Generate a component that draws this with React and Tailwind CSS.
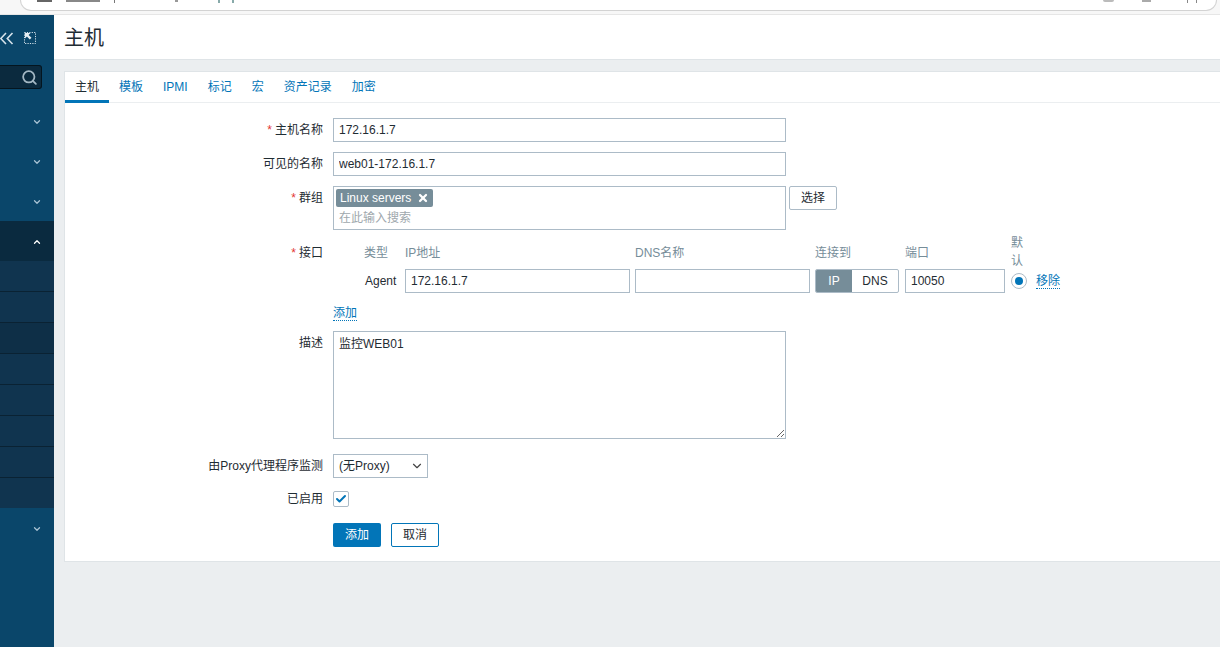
import { ChevronDown, ChevronUp, Search, Check, X } from 'lucide-react';

const font = { fontFamily: '"Liberation Sans", "Noto Sans CJK SC", Arial, sans-serif' };

const tabs = ['主机', '模板', 'IPMI', '标记', '宏', '资产记录', '加密'];
const subRows = [0, 1, 2, 3, 4, 5, 6, 7];

const inputCls = 'h-6 border border-[#acbbc7] bg-white px-[5px] text-xs text-[#1f2c33] outline-none';

const Label = ({ required, children, className = '' }) => (
  <div className={`w-[258px] shrink-0 text-right text-xs leading-6 text-[#1f2c33] ${className}`}>
    {required && <span className="mr-[3px] text-[#e33734]">*</span>}
    {children}
  </div>
);

const NavGroup = ({ height, chevronTop }) => (
  <div className="relative w-full shrink-0 bg-[#0a466a]" style={{ height }}>
    <ChevronDown className="absolute left-[32px] h-2.5 w-2.5 text-[#a9c3d4]" strokeWidth={3} style={{ top: chevronTop }} />
  </div>
);

const App = () => {
  return (
    <div className="flex h-[647px] w-[1220px] flex-col overflow-hidden bg-[#ebeef0]" style={font}>
      {/* browser chrome, almost cropped away */}
      <div className="h-[15px] shrink-0 border-b border-[#e6e6e6] bg-[#f7f7f7]">
        <div className="mx-[20px] flex h-[11px] w-[1197px] items-start rounded-b-[14px] border-x border-b border-[#d3d3d3] bg-white">
          <div className="ml-[16px] h-[2px] w-[15px] bg-[#666]" />
          <div className="ml-[14px] h-[2px] w-[34px] bg-[#888]" />
          <div className="ml-[14px] h-[3px] w-px bg-[#777]" />
          <div className="ml-[60px] h-[2px] w-[3px] bg-[#999]" />
          <div className="ml-[40px] h-[3px] w-[2px] bg-[#8aa]" />
          <div className="ml-[12px] h-[3px] w-[2px] bg-[#8aa]" />
          <div className="ml-auto mr-[28px] h-[2px] w-[11px] rounded-b bg-[#bbb]" />
          <div className="mr-[36px] h-[2px] w-[9px] bg-[#aaa]" />
          <div className="mr-[19px] h-[3px] w-[10px] border-x border-[#888]" />
        </div>
      </div>

      <div className="flex min-h-0 flex-1">
        {/* sidebar */}
        <aside className="flex w-[54px] shrink-0 flex-col bg-[#0a466a]">
          <div className="flex h-[50px] shrink-0 items-start pt-[17px]">
            <svg className="h-[13px] w-[14px]" viewBox="0 0 14 13" fill="none" stroke="#d5e2ea" strokeWidth="1.6">
              <path d="M6 1 .8 6.5 6 12M12.5 1 7.3 6.5l5.2 5.5" />
            </svg>
            <svg className="ml-[10px] h-3 w-3" viewBox="0 0 12 12" fill="none">
              <path d="M.5.5h11v11H.5z" stroke="#d5e2ea" strokeDasharray="1.2 1.2" />
              <path d="M1 1h5.5L4.6 2.9 7.5 5.8 5.8 7.5 2.9 4.6 1 6.5z" fill="#e6eef3" />
            </svg>
          </div>
          <div className="flex h-6 w-[42px] shrink-0 items-center justify-end rounded-r-[3px] border border-l-0 border-[#04151f] bg-[#0b2a3e] pr-[3px]">
            <Search className="h-[17px] w-[17px] text-[#a4b8c4]" strokeWidth={2.5} />
          </div>
          <NavGroup height={52} chevronTop={28} />
          <NavGroup height={40} chevronTop={16} />
          <NavGroup height={40} chevronTop={16} />
          <div className="relative h-[40px] shrink-0 bg-[#0a2a3f]">
            <ChevronUp className="absolute left-[32px] top-[16px] h-2.5 w-2.5 text-white" strokeWidth={3} />
          </div>
          <div className="shrink-0">
            {subRows.map((i) => (
              <div
                key={i}
                className={`border-[#0a2233] ${i === 2 ? 'bg-[#0e2f47]' : 'bg-[#10344f]'} ${i === 7 ? 'h-[30px]' : 'h-[31px] border-b'}`}
              />
            ))}
          </div>
          <NavGroup height={40} chevronTop={16} />
        </aside>

        {/* main */}
        <main className="min-w-0 flex-1">
          <div className="flex h-[45px] items-center border-b border-[#dfe4e7] bg-white pl-[10px] pt-[1px] text-[20px] text-[#1f2c33]">主机</div>

          <div className="ml-[10px] mt-[11px] h-[491px] w-[1170px] border border-[#dfe4e7] bg-white">
            <div className="flex h-[31px] border-b border-[#ebeef0] text-xs">
              {tabs.map((t, i) => (
                <div
                  key={t}
                  className={`flex h-[31px] items-center px-[10px] ${i === 0 ? 'border-b-[3px] border-[#0275b8] pt-[2px] text-[#1f2c33]' : 'pb-[1px] text-[#0275b8]'}`}
                >
                  {t}
                </div>
              ))}
            </div>

            <div className="flex flex-col pt-[15px]">
              <div className="flex gap-[10px]">
                <Label required>主机名称</Label>
                <input readOnly value="172.16.1.7" className={`${inputCls} w-[453px]`} />
              </div>

              <div className="mt-[10px] flex gap-[10px]">
                <Label>可见的名称</Label>
                <input readOnly value="web01-172.16.1.7" className={`${inputCls} w-[453px]`} />
              </div>

              <div className="mt-[10px] flex gap-[10px]">
                <Label required>群组</Label>
                <div className="h-[44px] w-[453px] border border-[#acbbc7] px-[2px] pt-[2px]">
                  <div className="flex h-[18px] w-fit items-center gap-[6px] rounded-[2px] bg-[#768d99] pl-[4px] pr-[4px] text-xs text-white">
                    Linux servers
                    <X className="h-3 w-3" strokeWidth={4.5} />
                  </div>
                  <div className="mt-[3px] pl-[3px] text-xs leading-[17px] text-[#a0a8ad]">在此输入搜索</div>
                </div>
                <button className="ml-[-7px] h-6 w-12 rounded-[2px] border border-[#acbbc7] text-xs text-[#1f2c33]">选择</button>
              </div>

              <div className="mt-[4px] flex gap-[10px]">
                <Label required className="pt-[7px]">接口</Label>
                <div className="flex items-end text-xs">
                  <div className="w-[72px]">
                    <div className="mb-[8px] pl-[31px] leading-[16px] text-[#768d99]">类型</div>
                    <div className="h-6 pl-[32px] leading-6 text-[#1f2c33]">Agent</div>
                  </div>
                  <div className="mr-[5px] w-[225px]">
                    <div className="mb-[8px] leading-[16px] text-[#768d99]">IP地址</div>
                    <input readOnly value="172.16.1.7" className={`${inputCls} w-full`} />
                  </div>
                  <div className="mr-[5px] w-[175px]">
                    <div className="mb-[8px] leading-[16px] text-[#768d99]">DNS名称</div>
                    <input readOnly value="" className={`${inputCls} w-full`} />
                  </div>
                  <div className="mr-[6px] w-[84px]">
                    <div className="mb-[8px] leading-[16px] text-[#768d99]">连接到</div>
                    <div className="flex h-6 overflow-hidden rounded-[2px] border border-[#acbbc7]">
                      <div className="flex w-[36px] items-center justify-center bg-[#768d99] text-white">IP</div>
                      <div className="flex flex-1 items-center justify-center text-[#1f2c33]">DNS</div>
                    </div>
                  </div>
                  <div className="mr-[6px] w-[100px]">
                    <div className="mb-[8px] leading-[16px] text-[#768d99]">端口</div>
                    <input readOnly value="10050" className={`${inputCls} w-full`} />
                  </div>
                  <div className="w-[25px]">
                    <div className="mb-[-1px] w-[12px] leading-[18px] text-[#768d99]">默认</div>
                    <div className="flex h-6 items-center">
                      <div className="flex h-4 w-4 items-center justify-center rounded-full border border-[#acbbc7]">
                        <div className="h-2 w-2 rounded-full bg-[#0275b8]" />
                      </div>
                    </div>
                  </div>
                  <div className="flex h-6 items-center">
                    <span className="border-b border-dotted border-[#0275b8] leading-[14px] text-[#0275b8]">移除</span>
                  </div>
                </div>
              </div>

              <div className="mt-[12px] pl-[268px] text-xs">
                <span className="border-b border-dotted border-[#0275b8] leading-[14px] text-[#0275b8]">添加</span>
              </div>

              <div className="mt-[10px] flex gap-[10px]">
                <Label>描述</Label>
                <textarea readOnly value="监控WEB01" className="h-[108px] w-[453px] border border-[#acbbc7] px-[5px] py-[4px] text-xs text-[#1f2c33] outline-none" />
              </div>

              <div className="mt-[15px] flex gap-[10px]">
                <Label>由Proxy代理程序监测</Label>
                <div className="flex h-6 w-[95px] items-center justify-between border border-[#acbbc7] pl-[5px] pr-[3px] text-xs text-[#1f2c33]">
                  (无Proxy)
                  <ChevronDown className="h-[14px] w-[14px] text-[#444]" strokeWidth={2} />
                </div>
              </div>

              <div className="mt-[9px] flex gap-[10px]">
                <Label>已启用</Label>
                <div className="flex h-4 w-4 items-center justify-center self-center rounded-[2px] border border-[#acbbc7]">
                  <Check className="h-3 w-3 text-[#0275b8]" strokeWidth={4} />
                </div>
              </div>

              <div className="mt-[12px] flex gap-[10px] pl-[268px] text-xs">
                <button className="h-6 w-12 rounded-[2px] bg-[#0275b8] text-white">添加</button>
                <button className="h-6 w-12 rounded-[2px] border border-[#0275b8] text-[#1f2c33]">取消</button>
              </div>
            </div>
          </div>
        </main>
      </div>
    </div>
  );
};

export default App;
